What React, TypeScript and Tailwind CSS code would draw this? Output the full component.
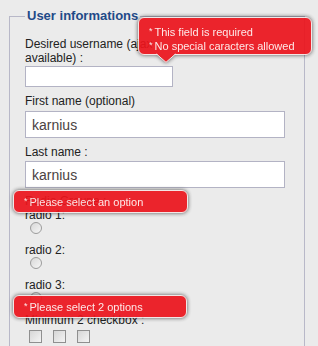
import React from "react";

function Tip({ className, lines, arrow }: { className: string; lines: string[]; arrow?: boolean }) {
  return (
    <div className={"absolute opacity-[0.92] drop-shadow-[0_0_2px_rgba(0,0,0,0.7)] " + className}>
      <div className="h-full rounded-[6px] border border-[#f4e6e6] bg-[#ec141c] px-[10px] text-[11px] leading-[13px] text-[#ffe8e8]">
        {lines.map((l) => (
          <div key={l}>
            <span className="text-[9px] align-[2px] mr-[2px]">*</span>
            {l}
          </div>
        ))}
      </div>
      {arrow && (
        <svg className="absolute left-[18px] top-[36px]" width="20" height="10" viewBox="0 0 20 10">
          <polygon points="0,0 20,0 10,9.5" fill="#ec141c" />
          <polyline points="0.5,1 10,9.3 19.5,1" fill="none" stroke="#f4e6e6" strokeWidth="1" />
        </svg>
      )}
    </div>
  );
}

function Radio() {
  return (
    <div className="h-[21px]">
      <span className="ml-[5px] block h-[12px] w-[12px] rounded-full border border-[#9c9c9c] bg-gradient-to-br from-[#d8d8d8] to-[#f6f6f6]" />
    </div>
  );
}

function Box() {
  return <span className="block h-[13px] w-[13px] border border-[#8f8f8f] bg-gradient-to-br from-[#d6d6d6] to-[#f4f4f4]" />;
}

export default function App() {
  const label = "block text-[12px] leading-[14px] text-[#222]";
  const field =
    "block border border-[#b3b3c4] bg-white px-[6px] text-[14px] text-[#4a4242] font-['Liberation_Sans',sans-serif] outline-none";
  return (
    <div className="relative h-[346px] overflow-hidden bg-[#ebebeb] pt-2 pl-[9px] font-['Liberation_Sans',Arial,sans-serif]">
      <fieldset className="w-[296px] border border-[#b8b8c8] pl-[15px] pt-[13px] pb-4">
        <legend className="px-[2px] text-[13px] leading-[16px] font-bold text-[#1f4a88]">User informations</legend>

        <label className={label + " w-[150px]"}>Desired username (ajax available) :</label>
        <input className={field + " mt-px h-[21px] w-[148px]"} defaultValue="" />

        <label className={label + " mt-[7px]"}>First name (optional)</label>
        <input className={field + " mt-[3px] h-[27px] w-[260px]"} defaultValue="karnius" />

        <label className={label + " mt-[7px]"}>Last name :</label>
        <input className={field + " mt-[2px] h-[27px] w-[260px]"} defaultValue="karnius" />

        <label className={label + " mt-[6px]"}>Radio Groupe :</label>
        <label className={label}>radio 1:</label>
        <Radio />
        <label className={label}>radio 2:</label>
        <Radio />
        <label className={label}>radio 3:</label>
        <Radio />

        <label className={label}>Minimum 2 checkbox :</label>
        <div className="ml-[4px] mt-[3px] flex gap-[11px]">
          <Box />
          <Box />
          <Box />
        </div>
      </fieldset>

      <Tip
        className="left-[138px] top-[17px] h-[38px] w-[174px] [&>div:first-child]:pt-[7px]"
        lines={["This field is required", "No special caracters allowed"]}
        arrow
      />
      <Tip className="left-[13px] top-[190px] h-[23px] w-[175px] [&>div:first-child]:pt-[4px]" lines={["Please select an option"]} />
      <Tip className="left-[13px] top-[295px] h-[23px] w-[174px] [&>div:first-child]:pt-[4px]" lines={["Please select 2 options"]} />
    </div>
  );
}
